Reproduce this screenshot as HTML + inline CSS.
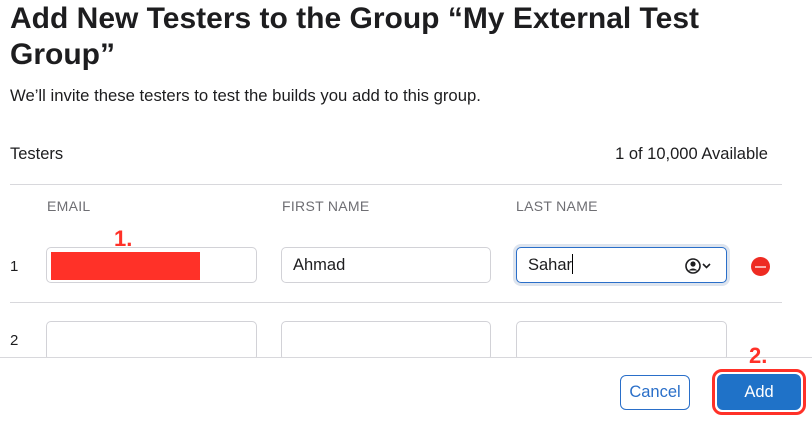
<!DOCTYPE html>
<html><head><style>
body{margin:0;width:812px;height:420px;background:#fff;font-family:"Liberation Sans",sans-serif;color:#1d1d1f;position:relative;overflow:hidden}
.a{position:absolute}
h1{position:absolute;left:10px;top:1px;margin:0;font-size:30px;font-weight:bold;line-height:36px;letter-spacing:0px}
.inp{position:absolute;height:36px;border:1px solid #d2d2d7;border-radius:5px;box-sizing:border-box;font-size:16.5px;line-height:35px;padding-left:11px;background:#fff}
.hd{position:absolute;top:198px;font-size:14px;color:#6e6e73;letter-spacing:0.3px}
.line{position:absolute;left:10px;width:772px;height:1px;background:#d8d8dc}
</style></head><body>
<h1>Add New Testers to the Group “My External Test<br>Group”</h1>
<div class="a" style="left:10px;top:86px;font-size:16.7px">We’ll invite these testers to test the builds you add to this group.</div>
<div class="a" style="left:10px;top:145px;font-size:16.5px">Testers</div>
<div class="a" style="right:44px;top:145px;font-size:16.5px">1 of 10,000 Available</div>
<div class="line" style="top:184px"></div>
<div class="hd" style="left:47px">EMAIL</div>
<div class="hd" style="left:282px">FIRST NAME</div>
<div class="hd" style="left:516px">LAST NAME</div>
<div class="a" style="left:10px;top:258px;font-size:15px">1</div>
<div class="inp" style="left:46px;top:247px;width:211px"></div>
<div class="a" style="left:51px;top:252px;width:149px;height:28px;background:#ff3128"></div>
<div class="a" style="left:114px;top:226px;font-size:22px;font-weight:bold;color:#ff3128">1.</div>
<div class="inp" style="left:281px;top:247px;width:210px">Ahmad</div>
<div class="inp" style="left:516px;top:247px;width:211px;border:1.5px solid #2a6fc9;box-shadow:0 0 0 3px #dde4ee">Sahar<span style="display:inline-block;width:1px;height:20px;background:#000;vertical-align:-4px"></span></div>
<svg class="a" style="left:685px;top:258px" width="30" height="16" viewBox="0 0 30 16"><circle cx="8" cy="8" r="7" fill="none" stroke="#1d1d1f" stroke-width="1.6"/><circle cx="8" cy="6" r="2.6" fill="#1d1d1f"/><path d="M3.5 12.5Q8 8.5 12.5 12.5" fill="#1d1d1f"/><path d="M18 6l3.5 3.5L25 6" fill="none" stroke="#1d1d1f" stroke-width="1.6"/></svg>
<div class="a" style="left:751px;top:257px;width:19px;height:19px;border-radius:50%;background:#ee2b22"></div>
<div class="a" style="left:755px;top:266px;width:11px;height:1.5px;background:#f9b0ad"></div>
<div class="line" style="top:302px"></div>
<div class="a" style="left:10px;top:332px;font-size:15px">2</div>
<div class="inp" style="left:46px;top:321px;width:211px;height:40px"></div>
<div class="inp" style="left:281px;top:321px;width:210px;height:40px"></div>
<div class="inp" style="left:516px;top:321px;width:211px;height:40px"></div>
<div class="a" style="left:0;top:357px;width:812px;height:63px;background:#fff;border-top:1px solid #d8d8dc"></div>
<div class="a" style="left:749px;top:343px;font-size:22px;font-weight:bold;color:#ff3128">2.</div>
<div class="a" style="left:620px;top:375px;width:70px;height:35px;border:1.5px solid #2a6fc9;border-radius:6px;box-sizing:border-box;color:#2a6fc9;font-size:16.5px;text-align:center;line-height:33px">Cancel</div>
<div class="a" style="left:712px;top:369px;width:94px;height:46px;border:3px solid #ff3128;border-radius:10px;box-sizing:border-box"></div>
<div class="a" style="left:717px;top:374px;width:84px;height:36px;background:#1f72c8;border-radius:6px;color:#fff;font-size:16.5px;text-align:center;line-height:37px">Add</div>
</body></html>
